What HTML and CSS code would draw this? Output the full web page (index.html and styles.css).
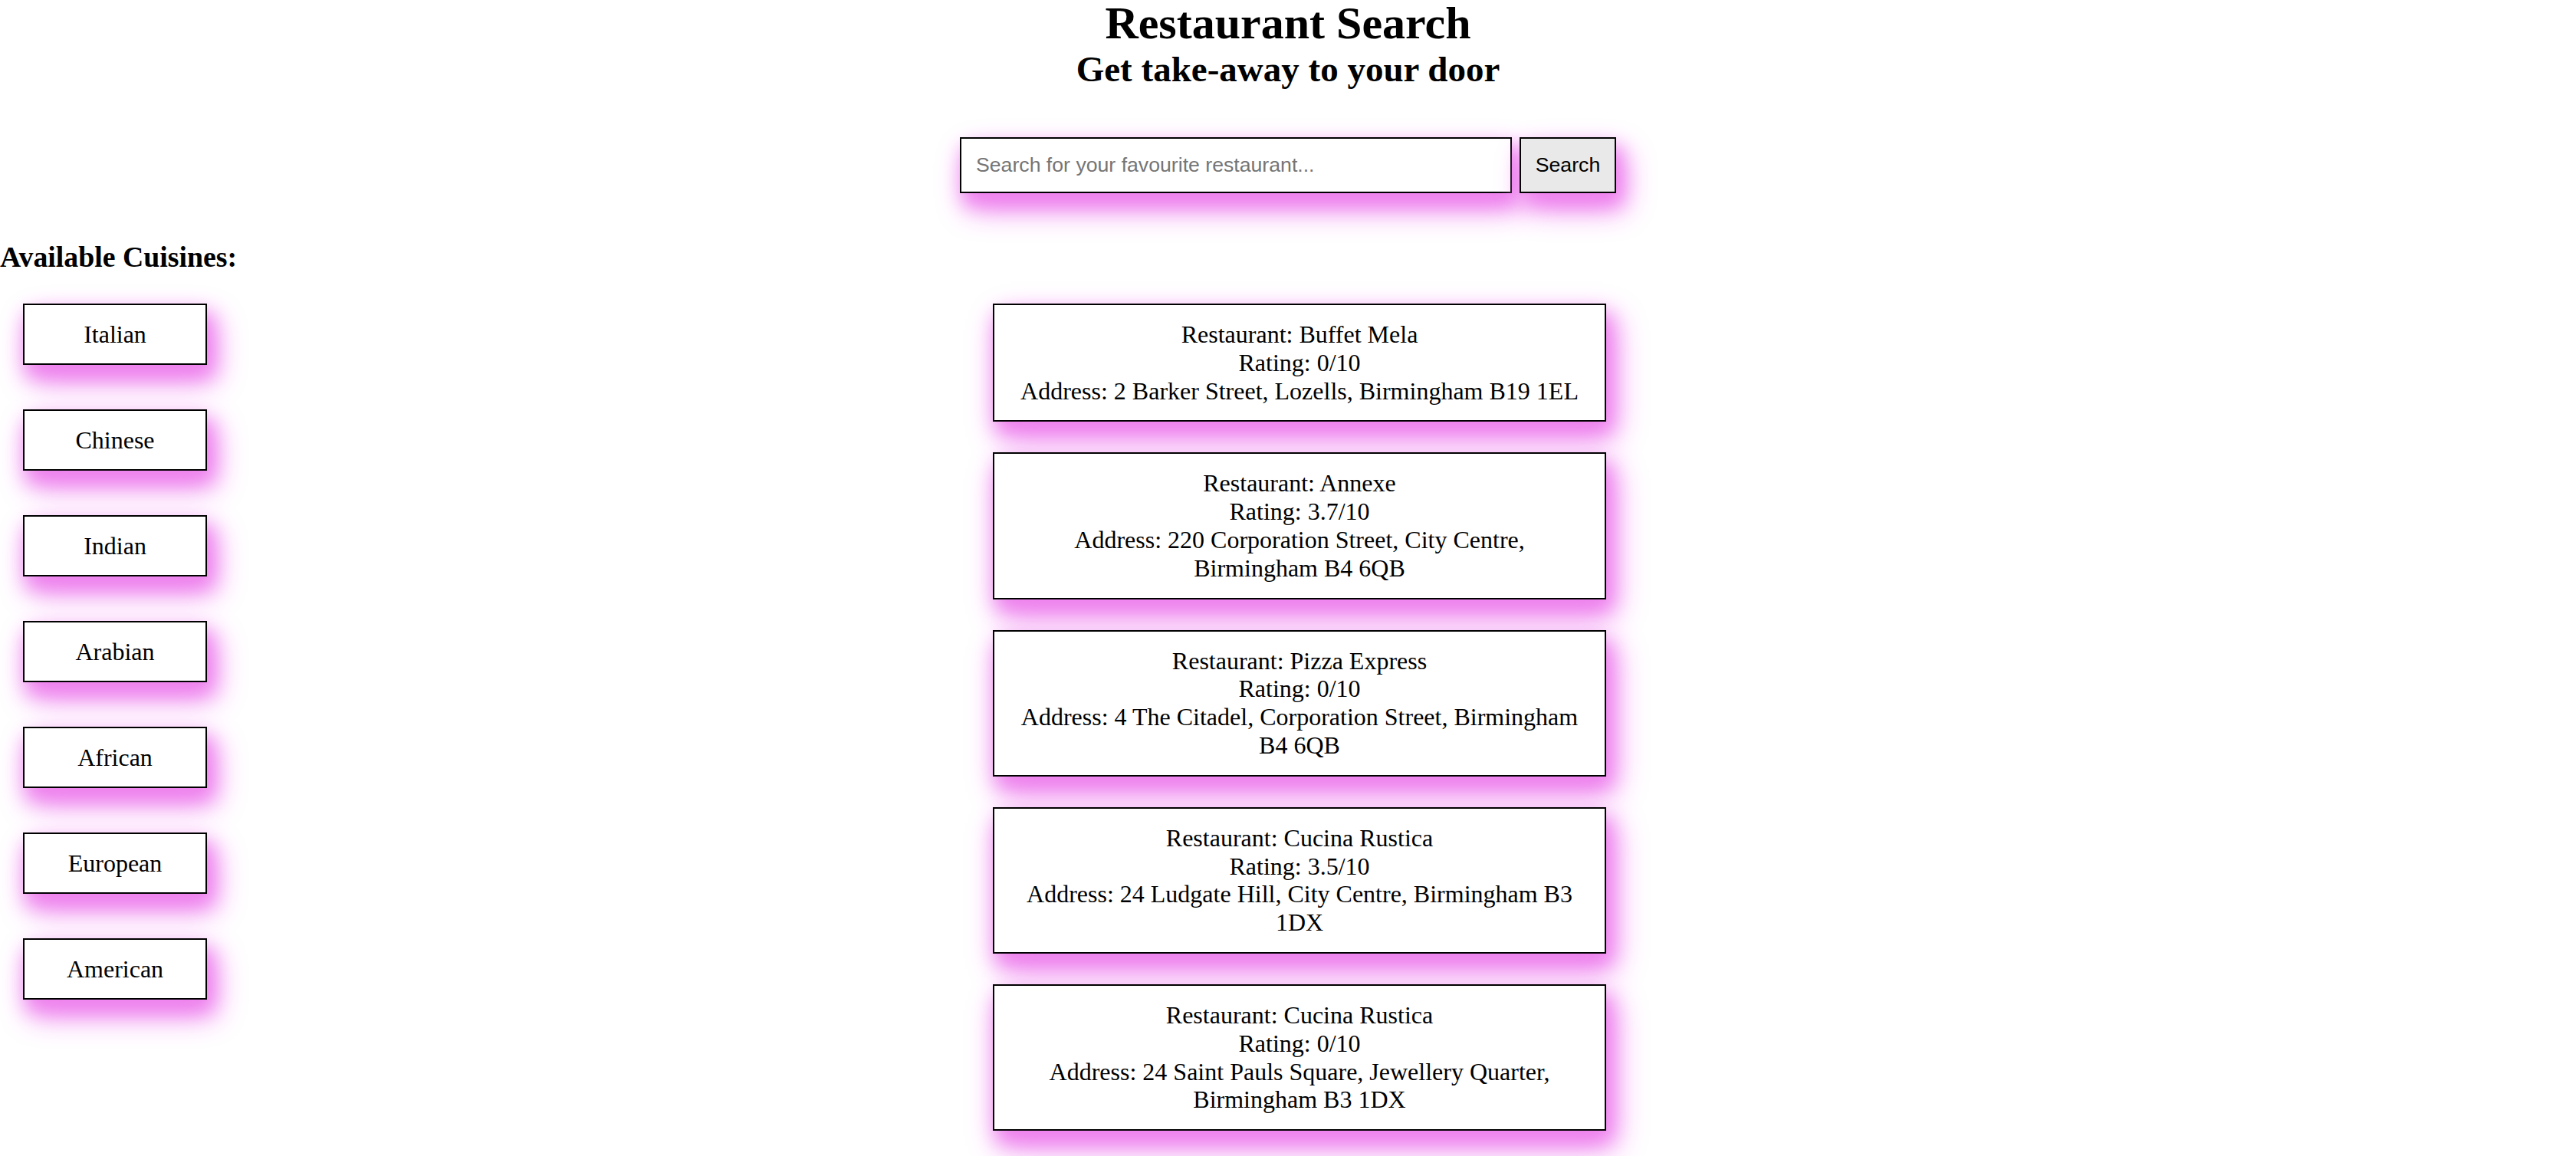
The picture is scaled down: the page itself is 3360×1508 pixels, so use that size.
FILE: index.html
```html
<!DOCTYPE html>
<html lang="en">
<head>
<meta charset="utf-8">
<title>Restaurant Search</title>
<link rel="stylesheet" href="styles.css">
</head>
<body>
  <header class="header">
    <h1 class="title">Restaurant Search</h1>
    <h2 class="subtitle">Get take-away to your door</h2>
    <form class="search" onsubmit="return false">
      <input class="search-input" type="text" placeholder="Search for your favourite restaurant...">
      <button class="search-button" type="submit">Search</button>
    </form>
  </header>
  <h3 class="cuisines-title">Available Cuisines:</h3>
  <div class="layout">
    <nav class="cuisines">
      <button class="cuisine">Italian</button>
      <button class="cuisine">Chinese</button>
      <button class="cuisine">Indian</button>
      <button class="cuisine">Arabian</button>
      <button class="cuisine">African</button>
      <button class="cuisine">European</button>
      <button class="cuisine">American</button>
    </nav>
    <main class="results">
      <div class="card">
        <div>Restaurant: Buffet Mela</div>
        <div>Rating: 0/10</div>
        <div>Address: 2 Barker Street, Lozells, Birmingham B19 1EL</div>
      </div>
      <div class="card">
        <div>Restaurant: Annexe</div>
        <div>Rating: 3.7/10</div>
        <div>Address: 220 Corporation Street, City Centre, Birmingham B4 6QB</div>
      </div>
      <div class="card">
        <div>Restaurant: Pizza Express</div>
        <div>Rating: 0/10</div>
        <div>Address: 4 The Citadel, Corporation Street, Birmingham B4 6QB</div>
      </div>
      <div class="card">
        <div>Restaurant: Cucina Rustica</div>
        <div>Rating: 3.5/10</div>
        <div>Address: 24 Ludgate Hill, City Centre, Birmingham B3 1DX</div>
      </div>
      <div class="card">
        <div>Restaurant: Cucina Rustica</div>
        <div>Rating: 0/10</div>
        <div>Address: 24 Saint Pauls Square, Jewellery Quarter, Birmingham B3 1DX</div>
      </div>
    </main>
  </div>
</body>
</html>
```
FILE: styles.css
```css
html, body {
  margin: 0;
  padding: 0;
  background: #ffffff;
}

body {
  min-height: 100vh;
  font-family: "Liberation Serif", "Times New Roman", serif;
  font-size: 32px;
  color: #000000;
}

.header {
  display: flex;
  flex-direction: column;
  align-items: center;
}

.title {
  margin: 0;
  font-size: 60px;
  line-height: 60px;
  font-weight: bold;
}

.subtitle {
  margin: 7px 0 0;
  font-size: 47px;
  line-height: 46px;
  font-weight: bold;
}

.search {
  margin-top: 66px;
  display: flex;
  gap: 10px;
}

.search-input,
.search-button {
  box-sizing: border-box;
  height: 73px;
  border: 2px solid #000000;
  border-radius: 0;
  font-family: "Liberation Sans", Arial, sans-serif;
  font-size: 26.67px;
  box-shadow: 10px 20px 40px violet, 6px 14px 24px violet;
  margin: 0;
}

.search-input {
  width: 720px;
  padding: 0 19px;
  background: #ffffff;
  color: #000000;
  outline: none;
}

.search-input::placeholder {
  color: #757575;
}

.search-button {
  width: 126px;
  padding: 0;
  background: #e9e9e9;
  color: #000000;
}

.cuisines-title {
  margin: 62px 0 0;
  font-size: 37.8px;
  line-height: 43px;
  font-weight: bold;
}

.layout {
  margin-top: 39px;
  display: grid;
  grid-template-columns: 1295px 800px;
  align-items: start;
}

.cuisines {
  display: flex;
  flex-direction: column;
  gap: 58px;
  padding-left: 30px;
}

.cuisine {
  box-sizing: border-box;
  width: 240px;
  height: 80px;
  margin: 0;
  padding: 0;
  border: 2px solid #000000;
  border-radius: 0;
  background: #ffffff;
  color: #000000;
  font-family: "Liberation Serif", "Times New Roman", serif;
  font-size: 32px;
  box-shadow: 10px 20px 40px violet, 6px 14px 24px violet;
}

.results {
  display: flex;
  flex-direction: column;
  gap: 40px;
}

.card {
  box-sizing: border-box;
  width: 800px;
  padding: 20px 24px;
  border: 2px solid #000000;
  background: #ffffff;
  text-align: center;
  line-height: 36.8px;
  box-shadow: 10px 20px 40px violet, 6px 14px 24px violet;
}
```
